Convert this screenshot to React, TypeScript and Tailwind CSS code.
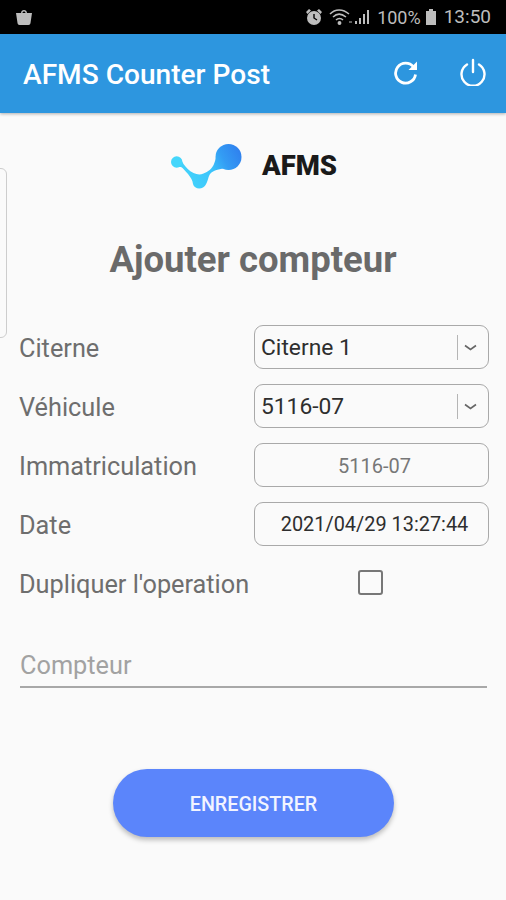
import React from 'react';

const Logo = () => (
    <svg width="73" height="48" viewBox="0 0 73 48" fill="none">
        <defs>
            <linearGradient id="afmsGrad" x1="8" y1="38" x2="70" y2="6" gradientUnits="userSpaceOnUse">
                <stop offset="0" stopColor="#45d6fb" />
                <stop offset="0.5" stopColor="#3cc4fb" />
                <stop offset="0.72" stopColor="#339cf4" />
                <stop offset="1" stopColor="#2f7fee" />
            </linearGradient>
        </defs>
        <path
            fill="url(#afmsGrad)"
            d="M7 15 C10 15 12 19 13.5 22 C16 25 19 29 23.5 31 C27 32.5 30 33 33.5 31.5 C38 29.5 42 27 44 22 C45.5 18 46 16 47 12 L53 26.5 C47 27.5 41 29 39 34 C37.5 38 37 43 33 45.5 C29 48 24 46 23 42 C22.5 38 21 36 18 32 C15 29 13 26 11 25 L7 25 Z"
        />
        <circle cx="6.7" cy="20" r="5.7" fill="#45d6fb" />
        <circle cx="58.5" cy="15" r="13" fill="url(#afmsGrad)" />
    </svg>
);

const SelectBox = ({ value }: { value: string }) => (
    <div className="flex h-[44px] w-[235px] items-center rounded-[9px] border border-[#a9a9a9] pl-[6px] text-[22.8px] text-[#2e2e2e]">
        <span className="flex-1 pt-[2px]">{value}</span>
        <div className="h-[25px] w-px bg-[#b5b5b5]" />
        <svg className="ml-[6px] mr-[11px]" width="13" height="7" viewBox="0 0 13 7" fill="none">
            <path d="M1 1.5 L6.5 5.5 L12 1.5" stroke="#666" strokeWidth="1.6" />
        </svg>
    </div>
);

const ReadBox = ({ value, className }: { value: string; className: string }) => (
    <div className={`flex h-[44px] w-[235px] items-center justify-center rounded-[9px] border border-[#a9a9a9] pl-[6px] pt-[2px] ${className}`}>
        {value}
    </div>
);

const Row = ({ label, children }: { label: string; children: React.ReactNode }) => (
    <div className="flex items-center justify-between">
        <span className="pt-[4px] text-[25.3px] text-[#6e6e6e]">{label}</span>
        {children}
    </div>
);

export default function App() {
    return (
        <div className="relative flex h-[900px] w-[506px] flex-col overflow-hidden bg-[#fafafa] font-['Roboto',sans-serif]">
            {/* status bar */}
            <div className="flex h-[34px] items-center justify-between bg-black pl-[15px] pr-[15px] text-[#bdbdbd]">
                <svg width="18" height="18" viewBox="0 0 18 18" fill="#bdbdbd">
                    <path d="M6 5 C6 1 12 1 12 5 L17 5 L15.5 15 C15.4 16 14.5 17 13.5 17 L4.5 17 C3.5 17 2.6 16 2.5 15 L1 5 Z M7.5 5 L10.5 5 C10.5 3 7.5 3 7.5 5 Z" fillRule="evenodd" />
                </svg>
                <div className="flex items-center">
                    <svg width="18" height="18" viewBox="0 0 18 18" fill="#bdbdbd">
                        <circle cx="9" cy="10" r="7" />
                        <path d="M1 4 L4 1 L6 2.5 L2.5 6 Z M17 4 L14 1 L12 2.5 L15.5 6 Z" />
                        <path d="M9 6 L9 10 L12 12" stroke="#000" strokeWidth="1.4" fill="none" />
                    </svg>
                    <svg className="ml-[6px]" width="24" height="18" viewBox="0 0 24 18" fill="none" stroke="#bdbdbd" strokeWidth="1.5">
                        <path d="M1 6 C6 0.5 14 0.5 20 6" />
                        <path d="M4 9 C8 5 12 5 17 9" />
                        <path d="M7 12 C9 10 12 10 14 12" />
                        <circle cx="10.5" cy="15" r="1.2" fill="#bdbdbd" />
                        <path d="M20 14 L23 14" strokeWidth="1" />
                    </svg>
                    <svg className="ml-[1px]" width="18" height="18" viewBox="0 0 18 18" fill="#bdbdbd">
                        <rect x="1" y="13" width="2" height="3" />
                        <rect x="5" y="10" width="2" height="6" />
                        <rect x="9" y="6" width="2" height="10" />
                        <rect x="13" y="2" width="2" height="14" />
                    </svg>
                    <span className="ml-[5px] text-[18px]">100%</span>
                    <svg className="ml-[4px]" width="12" height="18" viewBox="0 0 12 18" fill="#bdbdbd">
                        <path d="M4 1 H8 V3 H11 V17 H1 V3 H4 Z" />
                    </svg>
                    <span className="ml-[7px] text-[19px]">13:50</span>
                </div>
            </div>

            {/* app bar */}
            <div className="flex h-[79px] items-center justify-between bg-[#2d96df] pl-[23px] pr-[19px] shadow-[0_1px_3px_rgba(0,0,0,0.3)]">
                <span className="pt-[3px] text-[28.1px] font-medium text-white">AFMS Counter Post</span>
                <div className="flex items-center gap-[40px] pb-[4px]">
                    <svg width="26" height="26" viewBox="0 0 26 26" fill="none">
                        <path d="M20.5 8 A10 10 0 1 0 22.5 15.5" stroke="#fff" strokeWidth="2.8" />
                        <path d="M24 2.5 V11 H15.5 Z" fill="#fff" />
                    </svg>
                    <svg width="28" height="28" viewBox="0 0 28 28" fill="none" stroke="#fff" strokeWidth="2.4" strokeLinecap="round">
                        <path d="M14 2 V14" />
                        <path d="M8 6.5 A11.5 11.5 0 1 0 20 6.5" />
                    </svg>
                </div>
            </div>

            {/* left drawer handle */}
            <div className="absolute left-[-11px] top-[168px] h-[170px] w-[18px] rounded-[6px] border border-[#cdcdcd]" />

            {/* logo */}
            <div className="mt-[29px] flex h-[48px] items-center justify-center pl-[1px]">
                <Logo />
                <span className="ml-[19px] text-[27.5px] font-black text-[#1a1a1a]">AFMS</span>
            </div>

            <h1 className="mt-[47px] text-center text-[36.5px] font-bold leading-[46px] text-[#6a6a6a]">Ajouter compteur</h1>

            {/* form */}
            <div className="mt-[42px] flex flex-col gap-[15px] pl-[19px] pr-[17px]">
                <Row label="Citerne"><SelectBox value="Citerne 1" /></Row>
                <Row label="Véhicule"><SelectBox value="5116-07" /></Row>
                <Row label="Immatriculation">
                    <ReadBox value="5116-07" className="text-[20px] text-[#777777]" />
                </Row>
                <Row label="Date">
                    <ReadBox value="2021/04/29 13:27:44" className="text-[19.9px] text-[#2e2e2e]" />
                </Row>
            </div>

            <div className="mt-[18px] flex h-[36px] items-center pl-[19px]">
                <span className="w-[339px] pt-[6px] text-[25.3px] text-[#6e6e6e]">Dupliquer l'operation</span>
                <div className="h-[25px] w-[25px] rounded-[3px] border-2 border-[#777777]" />
            </div>

            <div className="ml-[20px] mr-[19px] mt-[50px] border-b-2 border-[#a8a8a8] pb-[4px] text-[25.3px] leading-[32px] text-[#a2a2a2]">
                Compteur
            </div>

            <button className="ml-[113px] mt-[81px] h-[68px] w-[281px] rounded-full bg-[#5b85fb] pt-[3px] text-[19.7px] font-medium text-[#f2f4ff] shadow-[0_3px_5px_rgba(0,0,0,0.25)]">
                ENREGISTRER
            </button>
        </div>
    );
}
